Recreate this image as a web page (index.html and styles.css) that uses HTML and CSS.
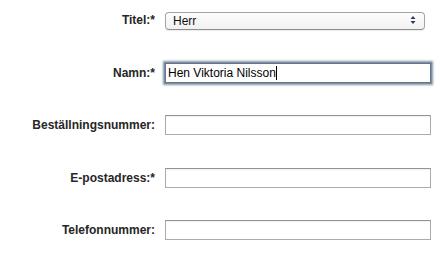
FILE: index.html
```html
<!DOCTYPE HTML>
<html lang="sv">
<head>
  <title>Kunduppgifter</title>
  <meta content="text/html;charset=utf-8" http-equiv="Content-type"/>
  <link rel="stylesheet" href="styles.css">
</head>
<body>
<form id="customer" class="form">
  <label class="label" for="title">Titel:*</label>
  <div class="selectWrap">
    <select id="title" class="select">
      <option>Herr</option>
      <option>Fru</option>
      <option>Hen</option>
    </select>
    <svg class="arrows" width="6" height="10" viewBox="0 0 6 10">
      <path d="M0.5 4 L3 1 L5.5 4 Z M0.5 6 L3 9 L5.5 6 Z" fill="#2a3a4c"/>
    </svg>
  </div>

  <label class="label" for="name">Namn:*</label>
  <div class="fieldWrap">
    <input id="name" class="field focused" type="text" value="Hen Viktoria Nilsson" autofocus/>
    <!-- text caret, headless browsers don't paint one -->
    <span class="caret"></span>
  </div>

  <label class="label" for="order">Beställningsnummer:</label>
  <input id="order" class="field" type="text"/>

  <label class="label" for="email">E-postadress:*</label>
  <input id="email" class="field" type="email"/>

  <label class="label" for="phone">Telefonnummer:</label>
  <input id="phone" class="field" type="tel"/>
</form>
</body>
</html>
```

FILE: styles.css
```css
body {
    font-family: 'Liberation Sans', Helvetica, Arial, sans-serif;
    background-color: #fff;
    color: #222;
    margin: 0;
}

.form {
    display: grid;
    grid-template-columns: 147px 266px;
    grid-auto-rows: 20px;
    column-gap: 10px;
    row-gap: 32.5px;
    align-items: center;
    padding: 10px 0 0 8px;
}

.label {
    font-size: 12px;
    font-weight: bold;
    text-align: right;
    color: #262626;
}

.selectWrap {
    position: relative;
    width: 260px;
    height: 18px;
}

.select {
    appearance: none;
    -webkit-appearance: none;
    box-sizing: border-box;
    width: 100%;
    height: 18px;
    margin: 0;
    padding: 0 20px 0 7px;
    font-family: 'Liberation Sans', Helvetica, Arial, sans-serif;
    font-size: 12px;
    color: #111;
    border: 1px solid #a4a4a4;
    border-bottom-color: #8e8e8e;
    border-radius: 4px;
    background: linear-gradient(#fdfdfd, #f1f1f1);
    box-shadow: 0 1px 1px rgba(0, 0, 0, 0.08);
}

.arrows {
    position: absolute;
    right: 9px;
    top: 4px;
    pointer-events: none;
}

.fieldWrap {
    position: relative;
    height: 20px;
}

.field {
    box-sizing: border-box;
    width: 266px;
    height: 20px;
    margin: 0;
    padding: 0 2px;
    font-family: 'Liberation Sans', Helvetica, Arial, sans-serif;
    font-size: 12px;
    color: #000;
    border: 1px solid #ababab;
    border-top-color: #939393;
    box-shadow: inset 0 1px 1px rgba(0, 0, 0, 0.06);
    background: #fff;
    outline: none;
}

.focused {
    border-color: #66768a;
    box-shadow: 0 0 0 1px #7d8da2, 0 0 2px 2px rgba(115, 133, 156, 0.85);
    caret-color: transparent;
}

.caret {
    position: absolute;
    left: 111px;
    top: 3px;
    width: 1px;
    height: 14px;
    background: #000;
}
```
